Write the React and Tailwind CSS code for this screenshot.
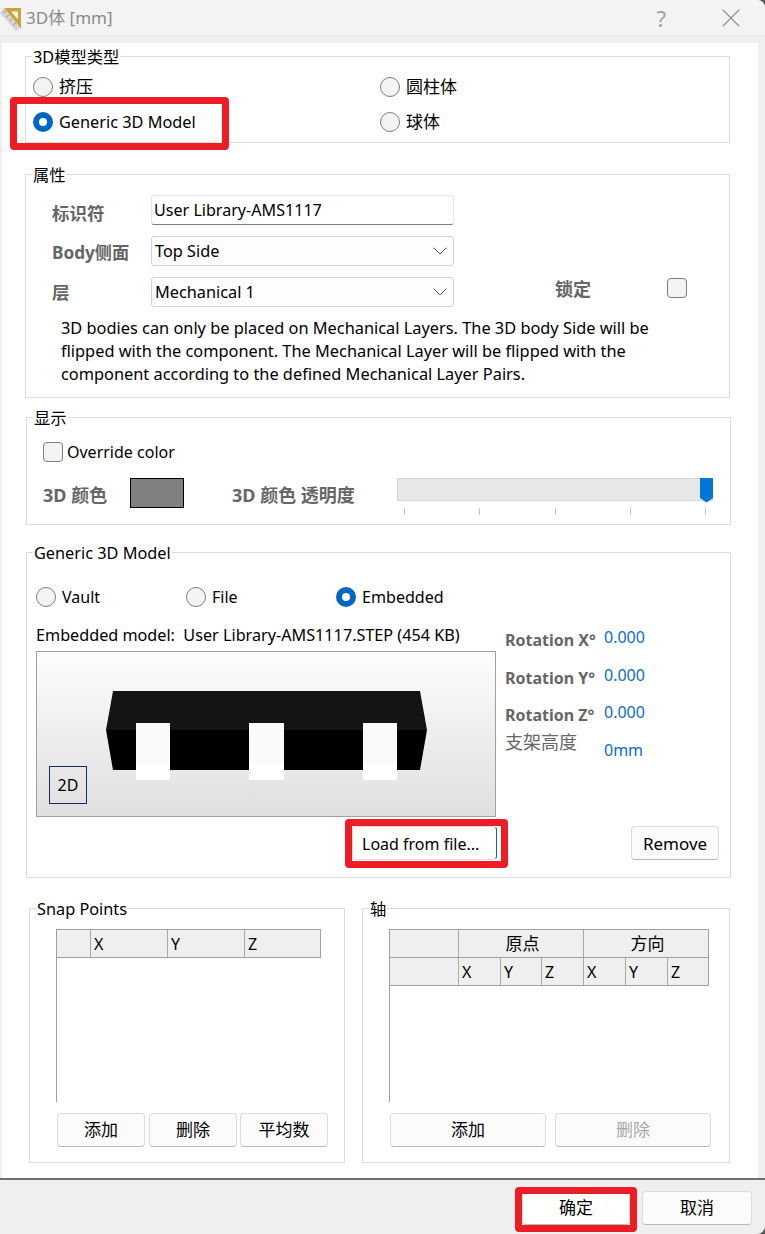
import React from 'react';
import { ChevronDown, X } from 'lucide-react';

const font = { fontFamily: '"Noto Sans", "Noto Sans CJK SC", sans-serif' };

const GroupBox = ({ title, className, children }) => (
  <div className={`relative border border-[#dcdcdc] ${className}`}>
    <span className="absolute left-[6px] top-[-10px] bg-white px-px text-[16.3px] leading-[20px] text-black">{title}</span>
    {children}
  </div>
);

const Radio = ({ label, checked, className = '', textClass = 'text-[16.3px]' }) => (
  <div className={`flex items-center gap-[6px] ${className}`}>
    {checked ? (
      <span className="w-5 h-5 rounded-full border-[6px] border-[#0067c0] bg-white" />
    ) : (
      <span className="w-5 h-5 rounded-full border border-[#7d7d7d] bg-[#f3f3f3]" />
    )}
    <span className={`leading-5 text-black ${textClass}`}>{label}</span>
  </div>
);

const BoldLabel = ({ children, className = '' }) => (
  <span className={`leading-5 font-bold text-[#666666] ${className}`}>{children}</span>
);

const Select = ({ value }) => (
  <div className="w-[303px] h-[30px] flex items-center justify-between pl-[3px] pr-px border border-[#d2d2d2] rounded-[3px] bg-[#fdfdfd] text-[16.3px] text-black">
    <span>{value}</span>
    <ChevronDown className="w-6 h-6 text-[#555]" strokeWidth={1} />
  </div>
);

const Button = ({ children, className = '', disabled }) => (
  <div className={`h-[34px] flex items-center justify-center bg-[#fbfbfb] border border-[#dcdcdc] border-b-[#b8b8b8] rounded-[4px] text-[17px] ${disabled ? 'text-[#a8a8a8]' : 'text-black'} ${className}`}>
    {children}
  </div>
);

const HeadCell = ({ children, className = '' }) => (
  <div className={`h-full flex items-center pl-[3px] border-r border-[#a8a8a8] text-[16px] text-black ${className}`}>{children}</div>
);

const Rotation = ({ label, value, className = '' }) => (
  <div className={`flex ${className}`}>
    <BoldLabel className="w-[99px] mt-[3px] text-[16px]">{label}</BoldLabel>
    <span className="text-[16px] leading-5 text-[#0a6cd0]">{value}</span>
  </div>
);

const Highlight = ({ className }) => (
  <div className={`absolute border-[7px] border-[#ee1c25] rounded-[4px] ${className}`} />
);

const App = () => {
  return (
    <div className="w-[765px] h-[1234px] bg-[#5a5a5a]">
      <div className="relative w-full h-full overflow-hidden rounded-tr-[8px] rounded-br-[8px] bg-[#efefef] flex flex-col" style={font}>
        {/* Title bar */}
        <div className="h-[35px] shrink-0 bg-[#f3f3f3] flex items-center pr-[18px]">
          <svg width="22" height="28" viewBox="0 0 22 28" className="shrink-0">
            <path d="M4 4 H21 V25 Z" fill="#c9a43c" />
            <path d="M11 7.5 H18 V15.5 Z" fill="#f7f3e2" />
            <path d="M0 9 L4 4 L20 23 L16 27 Z" fill="#d4d4d4" />
            <path d="M3 9 L6 7 M6 13 L9 11 M9 17 L12 15 M13 21 L16 19" stroke="#9a9a9a" strokeWidth="1" />
          </svg>
          <span className="ml-[4px] text-[17px] text-[#8a8a8a]">3D体 [mm]</span>
          <span className="ml-auto text-[22px] leading-none text-[#a0a0a0]">?</span>
          <X className="ml-[49px] w-8 h-8 text-[#8f8f8f]" strokeWidth={0.8} />
        </div>
        <div className="h-[8px] shrink-0 bg-[#efefef]" />

        {/* Dialog body */}
        <div className="ml-[2px] w-[756px] h-[1135px] shrink-0 bg-white pt-[13px] flex flex-col">
          <GroupBox title="3D模型类型" className="ml-[23px] w-[705px] h-[87px] grid grid-cols-[347px_1fr] content-start gap-y-[15px] pl-[7px] pt-[20px]">
            <Radio label="挤压" textClass="text-[17px]" />
            <Radio label="圆柱体" textClass="text-[17px]" />
            <Radio label="Generic 3D Model" checked />
            <Radio label="球体" textClass="text-[17px]" />
          </GroupBox>

          <GroupBox title="属性" className="ml-[23px] mt-[31px] w-[705px] h-[224px] pt-[20px]">
            <div className="flex items-center">
              <BoldLabel className="w-[99px] ml-[26px] text-[17.5px] mt-[5px]">标识符</BoldLabel>
              <div className="w-[303px] h-[30px] flex items-center pl-[2px] border border-[#e4e4e4] border-b-[#808080] rounded-[3px] bg-white text-[16.1px] text-black">User Library-AMS1117</div>
            </div>
            <div className="flex items-center mt-[11px]">
              <BoldLabel className="w-[99px] ml-[26px] text-[17.2px] mt-[3px]">Body侧面</BoldLabel>
              <Select value="Top Side" />
            </div>
            <div className="flex items-center mt-[11px]">
              <BoldLabel className="w-[99px] ml-[26px] text-[17.5px]">层</BoldLabel>
              <Select value="Mechanical 1" />
              <BoldLabel className="ml-[101px] text-[18px] mt-[-6px]">锁定</BoldLabel>
              <span className="ml-[76px] mt-[-8px] w-5 h-5 rounded-[4px] border border-[#7d7d7d] bg-[#f3f3f3]" />
            </div>
            <p className="ml-[35px] mt-[10px] w-[640px] text-[16.35px] leading-[23px] text-black">
              3D bodies can only be placed on Mechanical Layers. The 3D body Side will be<br />
              flipped with the component. The Mechanical Layer will be flipped with the<br />
              component according to the defined Mechanical Layer Pairs.
            </p>
          </GroupBox>

          <GroupBox title="显示" className="ml-[24px] mt-[19px] w-[705px] h-[108px] pt-[24px] pl-[16px]">
            <div className="flex items-center">
              <span className="w-5 h-5 rounded-[4px] border border-[#7d7d7d] bg-[#f3f3f3]" />
              <span className="ml-[4px] text-[16px] leading-5 text-black">Override color</span>
            </div>
            <div className="flex items-start mt-[16px]">
              <BoldLabel className="w-[87px] mt-[7px] text-[18px]">3D 颜色</BoldLabel>
              <span className="w-[54px] h-[30px] bg-[#808080] border border-black" />
              <BoldLabel className="ml-[48px] w-[165px] mt-[7px] text-[18px]">3D 颜色 透明度</BoldLabel>
              <div className="w-[316px]">
                <div className="relative h-[23px] bg-[#e6e8e9] border border-[#d5d5d5]">
                  <svg width="13" height="25" viewBox="0 0 13 25" className="absolute right-[-1px] top-[-1px]">
                    <path d="M0 0 H13 V20 L6.5 24.5 L0 20 Z" fill="#0078d7" />
                  </svg>
                </div>
                <div className="flex justify-between pl-[7px] pr-[7px] mt-[7px]">
                  <span className="w-px h-[7px] bg-[#c4c4c4]" />
                  <span className="w-px h-[7px] bg-[#c4c4c4]" />
                  <span className="w-px h-[7px] bg-[#c4c4c4]" />
                  <span className="w-px h-[7px] bg-[#c4c4c4]" />
                  <span className="w-px h-[7px] bg-[#c4c4c4]" />
                </div>
              </div>
            </div>
          </GroupBox>

          <GroupBox title="Generic 3D Model" className="ml-[24px] mt-[27px] w-[705px] h-[326px] pt-[34px] pl-[9px]">
            <div className="flex">
              <Radio label="Vault" className="w-[150px]" textClass="text-[16px]" />
              <Radio label="File" className="w-[150px]" textClass="text-[16px]" />
              <Radio label="Embedded" checked textClass="text-[16.1px]" />
            </div>
            <div className="flex mt-[18px]">
              <div className="w-[469px]">
                <p className="text-[16.2px] leading-5 text-black whitespace-pre">Embedded model:  User Library-AMS1117.STEP (454 KB)</p>
                <div className="relative mt-[6px] w-[460px] h-[166px] border border-[#a0a0a0] bg-gradient-to-b from-[#fdfdfd] to-[#dfdfdf]">
                  <svg width="458" height="164" viewBox="0 0 458 164" className="block">
                    <path d="M76 39 H383 L390 78 H69 Z" fill="#141414" />
                    <path d="M69 78 H390 L383 118 H76 Z" fill="#000000" />
                    <rect x="99" y="71" width="34" height="41" fill="#fafafa" />
                    <rect x="99" y="112" width="34" height="16" fill="#ffffff" />
                    <rect x="212" y="71" width="35" height="41" fill="#fafafa" />
                    <rect x="212" y="112" width="35" height="16" fill="#ffffff" />
                    <rect x="326" y="71" width="34" height="41" fill="#fafafa" />
                    <rect x="326" y="112" width="34" height="16" fill="#ffffff" />
                  </svg>
                  <div className="absolute left-[12px] bottom-[12px] w-[38px] h-[38px] flex items-center justify-center border border-[#1a2a6c] text-[16px] text-black">2D</div>
                </div>
              </div>
              <div className="flex flex-col">
                <Rotation label="Rotation X°" value="0.000" className="mt-[2px]" />
                <Rotation label="Rotation Y°" value="0.000" className="mt-[15px]" />
                <Rotation label="Rotation Z°" value="0.000" className="mt-[14px]" />
                <div className="flex mt-[7px]">
                  <span className="w-[99px] text-[18px] leading-5 text-[#666666]">支架高度</span>
                  <span className="mt-[8px] text-[16px] leading-5 text-[#0a6cd0]">0mm</span>
                </div>
              </div>
            </div>
            <div className="flex mt-[9px]">
              <div className="ml-[316px] w-[145px] h-[34px] flex items-center pl-[9px] pt-px bg-white border border-[#dcdcdc] border-r-[#0067c0] rounded-[4px] text-[16px] text-black">Load from file...</div>
              <Button className="ml-[134px] w-[88px] pt-px text-[16px]">Remove</Button>
            </div>
          </GroupBox>

          <div className="ml-[27px] mt-[30px] flex gap-[17px]">
            <GroupBox title="Snap Points" className="w-[316px] h-[255px] pt-[20px] pl-[26px]">
              <div className="w-[265px] h-[173px] border-l border-[#a0a0a0]">
                <div className="h-[29px] flex bg-[#efefef] border-y border-r border-[#a0a0a0]">
                  <HeadCell className="w-[34px] pl-0" />
                  <HeadCell className="w-[77px]">X</HeadCell>
                  <HeadCell className="w-[77px]">Y</HeadCell>
                  <HeadCell className="flex-1 border-r-0">Z</HeadCell>
                </div>
              </div>
              <div className="flex gap-[4px] mt-[11px] ml-[1px]">
                <Button className="w-[88px]">添加</Button>
                <Button className="w-[88px]">删除</Button>
                <Button className="w-[88px] -ml-px">平均数</Button>
              </div>
            </GroupBox>

            <GroupBox title="轴" className="w-[368px] h-[255px] pt-[20px] pl-[26px]">
              <div className="w-[320px] h-[173px] border-l border-[#a0a0a0]">
                <div className="h-[29px] flex bg-[#efefef] border-y border-r border-[#a0a0a0]">
                  <HeadCell className="w-[69px] pl-0" />
                  <HeadCell className="w-[125px] justify-center pl-0 text-[17px]">原点</HeadCell>
                  <HeadCell className="flex-1 justify-center pl-0 border-r-0 text-[17px]">方向</HeadCell>
                </div>
                <div className="h-[28px] flex bg-[#efefef] border-b border-r border-[#a0a0a0]">
                  <HeadCell className="w-[69px] pl-0" />
                  <HeadCell className="w-[42px]">X</HeadCell>
                  <HeadCell className="w-[41px]">Y</HeadCell>
                  <HeadCell className="w-[42px]">Z</HeadCell>
                  <HeadCell className="w-[42px]">X</HeadCell>
                  <HeadCell className="w-[42px]">Y</HeadCell>
                  <HeadCell className="flex-1 border-r-0">Z</HeadCell>
                </div>
              </div>
              <div className="flex gap-[9px] mt-[11px] ml-[1px]">
                <Button className="w-[156px]">添加</Button>
                <Button className="w-[156px]" disabled>删除</Button>
              </div>
            </GroupBox>
          </div>
        </div>

        {/* Footer */}
        <div className="h-[2px] shrink-0 bg-[#6e6e6e]" />
        <div className="flex-1 flex justify-end items-start pt-[11px] pr-[13px] gap-[12px]">
          <Button className="w-[108px] h-[34px] bg-white">确定</Button>
          <Button className="w-[110px] h-[34px]">取消</Button>
        </div>

        {/* Red annotation boxes drawn over the screenshot */}
        <Highlight className="left-[10px] top-[97px] w-[219px] h-[53px]" />
        <Highlight className="left-[345px] top-[819px] w-[163px] h-[49px]" />
        <Highlight className="left-[515px] top-[1187px] w-[122px] h-[45px]" />
      </div>
    </div>
  );
};

export default App;
